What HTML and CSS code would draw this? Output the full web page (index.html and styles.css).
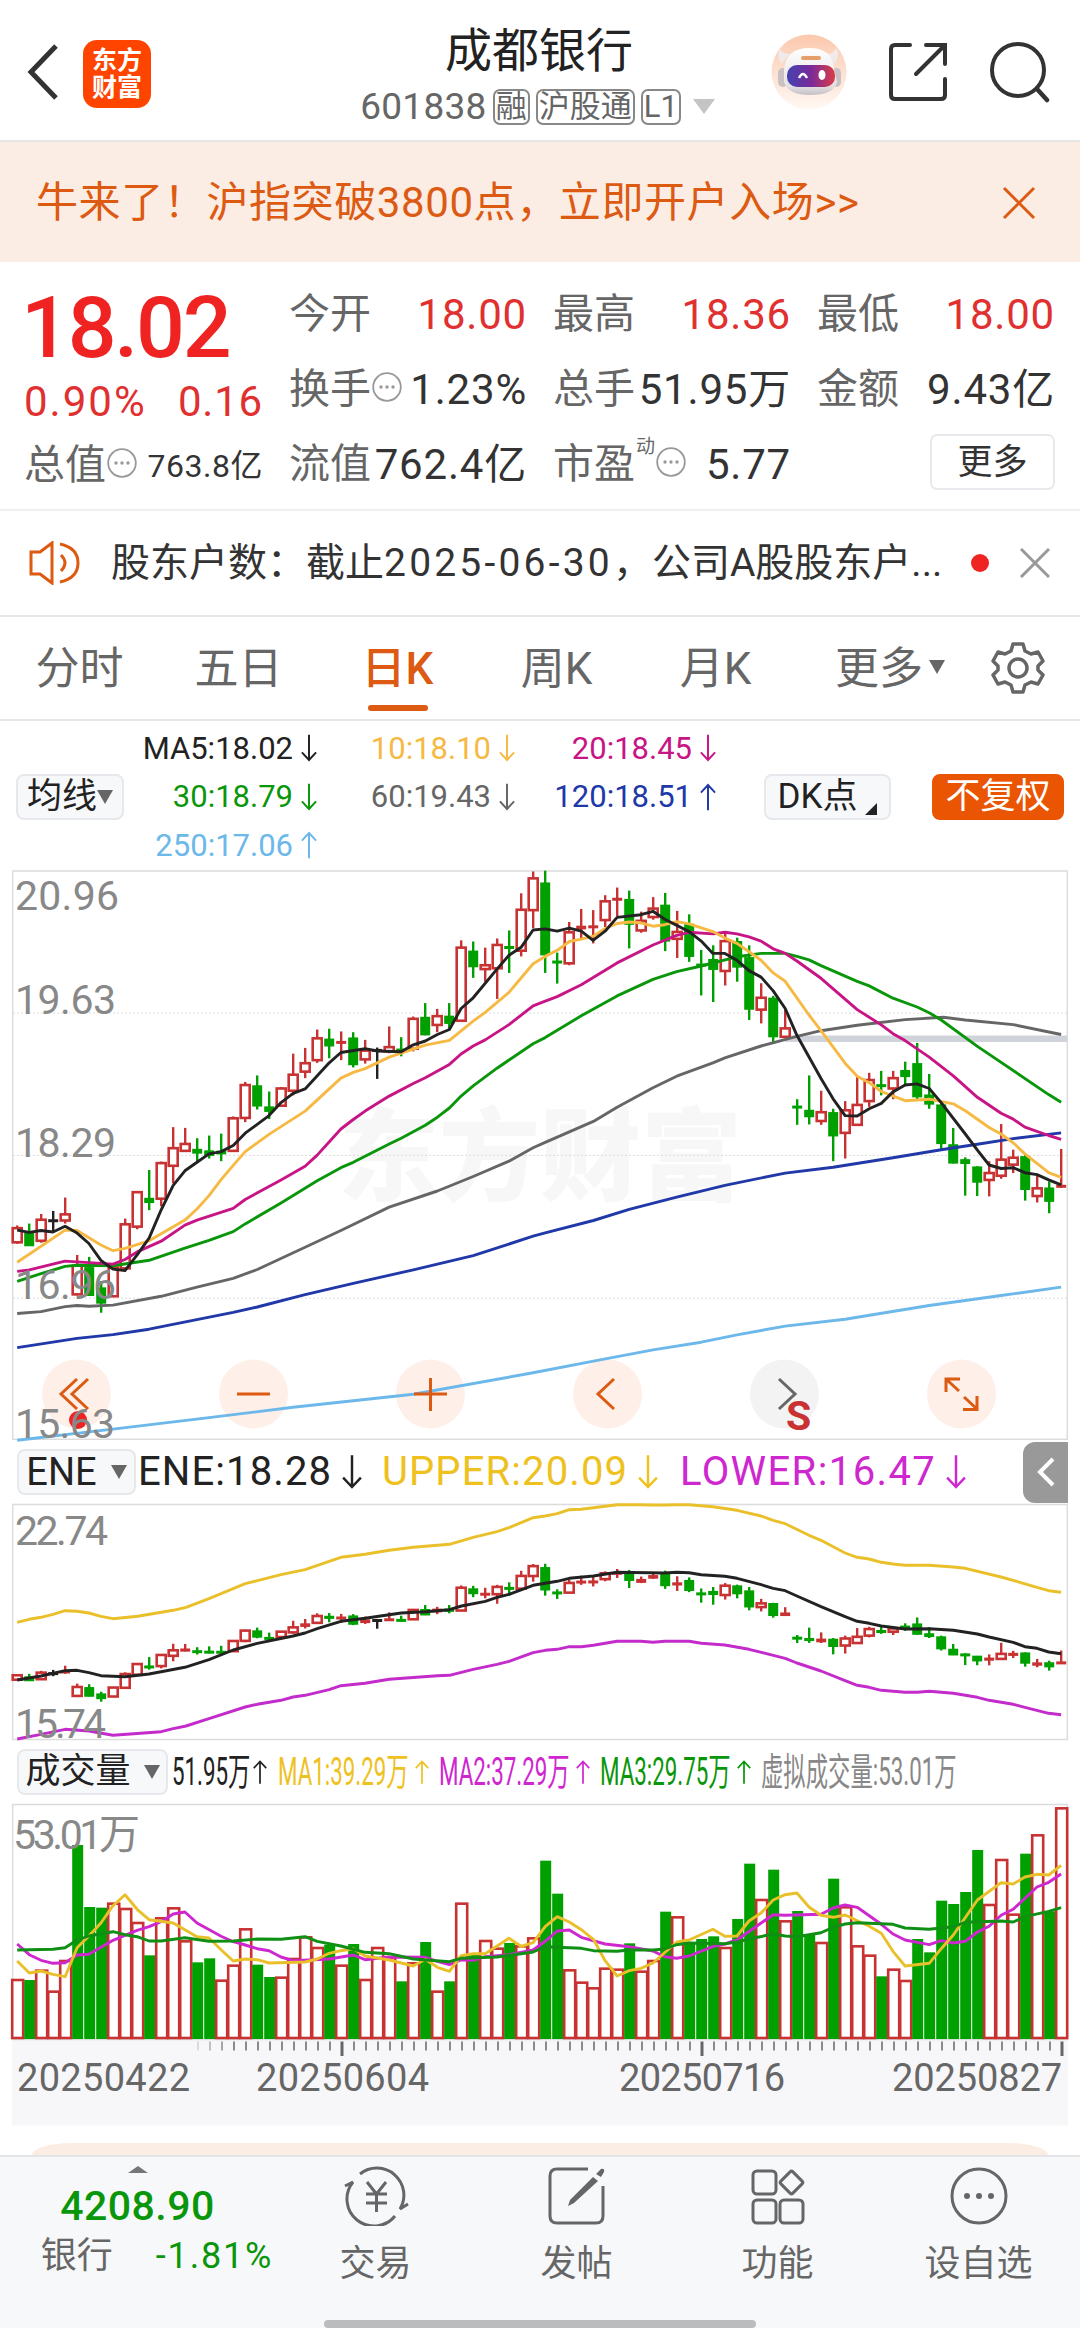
FILE: index.html
```
<!DOCTYPE html>
<html lang="zh-CN">
<head>
  <meta charset="UTF-8" />
  <meta name="viewport" content="width=device-width, initial-scale=1.0"/>
  <title>成都银行 601838</title>
  <link rel="stylesheet" href="styles.css">
</head>
<body>

  <svg class="defs" width="0" height="0">
    <symbol id="down" viewBox="0 0 18 30"><path d="M9 0V28M1 20L9 28.500L17 20" fill="none" stroke="currentColor" stroke-width="2.200"/></symbol>
    <symbol id="up" viewBox="0 0 18 30"><path d="M9 30V2M1 10L9 1.500L17 10" fill="none" stroke="currentColor" stroke-width="2.200"/></symbol>
    <symbol id="dots" viewBox="0 0 30 30"><circle cx="15" cy="15" r="13.800" fill="none" stroke="#999" stroke-width="1.800"/><circle cx="9" cy="15" r="1.700" fill="#999"/><circle cx="15" cy="15" r="1.700" fill="#999"/><circle cx="21" cy="15" r="1.700" fill="#999"/></symbol>
  </svg>

  <header class="top">
    <svg class="back" width="32" height="56" viewBox="0 0 32 56"><path d="M29 2L4 28L29 54" fill="none" stroke="#333" stroke-width="5"/></svg>
    <div class="logo"><span>东方</span><span>财富</span></div>
    <div class="title">
      <h1>成都银行</h1>
      <div class="code"><span class="num">601838</span><i>融</i><i>沪股通</i><i>L1</i><b class="tri"></b></div>
    </div>
    <div class="actions">
      <svg width="76" height="76" viewBox="0 0 76 76">
        <defs>
          <linearGradient id="halo" x1="0" y1="0" x2="0" y2="1"><stop offset="0" stop-color="#fbc8ad"/><stop offset="1" stop-color="#fff8f4"/></linearGradient>
          <linearGradient id="face" x1="0" y1="0" x2="1" y2="0"><stop offset="0" stop-color="#4343b0"/><stop offset=".5" stop-color="#7a2a9a"/><stop offset="1" stop-color="#dc3c44"/></linearGradient>
          <linearGradient id="skin" x1="0" y1="0" x2="0" y2="1"><stop offset="0" stop-color="#fff"/><stop offset=".8" stop-color="#e6e2e4"/><stop offset="1" stop-color="#c4c0c4"/></linearGradient>
        </defs>
        <circle cx="38" cy="38" r="37.500" fill="url(#halo)"/>
        <path d="M10 30Q5 20 9 15Q12 20 19 20ZM64 30Q70 20 65 14Q62 20 56 20Z" fill="#f0eaea"/>
        <rect x="7" y="34" width="10" height="19" rx="5" fill="#c8c2c4"/>
        <rect x="61" y="34" width="9" height="19" rx="5" fill="#c8c2c4"/>
        <path d="M13 36Q15 14 38 14Q62 14 63 35L66 48Q63 61 39 61Q17 61 13 48Z" fill="url(#skin)"/>
        <rect x="30" y="22" width="20" height="4" rx="2" fill="#e3a06c"/>
        <rect x="16" y="31" width="48" height="22" rx="10" fill="url(#face)"/>
        <path d="M28 44Q32 36 36 44" fill="none" stroke="#fff" stroke-width="2.500"/>
        <ellipse cx="51" cy="41" rx="3.500" ry="5" fill="#fff"/>
      </svg>
      <svg width="60" height="60" viewBox="0 0 60 60"><path d="M22 3H7Q3 3 3 7V53Q3 57 7 57H53Q57 57 57 53V37M38 3H57V22M56 4L28 32" fill="none" stroke="#333" stroke-width="4" stroke-linecap="round"/></svg>
      <svg width="62" height="62" viewBox="0 0 62 62"><circle cx="29" cy="29" r="26" fill="none" stroke="#333" stroke-width="4"/><path d="M48 48L58 59" stroke="#333" stroke-width="4.500" stroke-linecap="round"/></svg>
    </div>
  </header>

  <div class="banner">
    <span>牛来了！沪指突破3800点，立即开户入场&gt;&gt;</span>
    <svg width="34" height="34" viewBox="0 0 34 34"><path d="M2 2L32 32M32 2L2 32" stroke="#dc5a12" stroke-width="3"/></svg>
  </div>

  <section class="quote">
    <div class="price">
      <strong>18.02</strong>
      <div class="row change"><span>0.90%</span><span>0.16</span></div>
      <div class="row total"><label>总值</label><svg width="30" height="30"><use href="#dots"/></svg><span class="small">763.8亿</span></div>
    </div>
    <div class="cells">
      <div class="row"><label>今开</label><span class="red">18.00</span></div>
      <div class="row"><label>最高</label><span class="red">18.36</span></div>
      <div class="row"><label>最低</label><span class="red">18.00</span></div>
      <div class="row"><label>换手</label><svg width="30" height="30"><use href="#dots"/></svg><span>1.23%</span></div>
      <div class="row"><label>总手</label><span>51.95万</span></div>
      <div class="row"><label>金额</label><span>9.43亿</span></div>
      <div class="row"><label>流值</label><span>762.4亿</span></div>
      <div class="row"><label>市盈</label><sup>动</sup><svg width="30" height="30"><use href="#dots"/></svg><span>5.77</span></div>
      <div class="row end"><button class="more">更多</button></div>
    </div>
  </section>

  <div class="notice">
    <svg width="52" height="44" viewBox="0 0 52 44"><path d="M2 11H11L23 2V42L11 33H2ZM32 14Q40 22 32 30M31 3Q49 7 49 22Q49 37 31 41" fill="none" stroke="#dc5a12" stroke-width="3"/></svg>
    <p>股东户数：截止<span>2025-06-30</span>，公司A股股东户...</p>
    <b class="dot"></b>
    <svg width="30" height="30" viewBox="0 0 30 30"><path d="M1 1L29 29M29 1L1 29" stroke="#999" stroke-width="3"/></svg>
  </div>

  <nav class="tabs">
    <a>分时</a>
    <a>五日</a>
    <a class="active">日K</a>
    <a>周K</a>
    <a>月K</a>
    <a>更多<b class="tri"></b></a>
    <svg width="54" height="54" viewBox="0 0 54 54"><path d="M22 3H32L34 10L40 13L47 11L52 20L47 25V29L52 34L47 43L40 41L34 44L32 51H22L20 44L14 41L7 43L2 34L7 29V25L2 20L7 11L14 13L20 10Z" fill="none" stroke="#666" stroke-width="3.500" stroke-linejoin="round"/><circle cx="27" cy="27" r="9" fill="none" stroke="#666" stroke-width="3.500"/></svg>
  </nav>

  <div class="legend">
    <button class="pick">均线<b class="tri"></b></button>
    <div class="ma">
      <span class="c-black">MA5:18.02<svg><use href="#down"/></svg></span>
      <span class="c-orange">10:18.10<svg><use href="#down"/></svg></span>
      <span class="c-pink">20:18.45<svg><use href="#down"/></svg></span>
      <span class="c-green">30:18.79<svg><use href="#down"/></svg></span>
      <span class="c-gray">60:19.43<svg><use href="#down"/></svg></span>
      <span class="c-blue">120:18.51<svg><use href="#up"/></svg></span>
      <span class="c-sky">250:17.06<svg><use href="#up"/></svg></span>
    </div>
    <button class="pick dk">DK点<b class="corner"></b></button>
    <button class="pick adjust">不复权</button>
  </div>

  <svg id="kline" class="chart" width="1080" height="570" viewBox="0 870 1080 570"></svg>

  <div class="sub-head">
    <button class="pick ene">ENE<b class="tri"></b></button>
    <span class="c-black e1">ENE:18.28<svg><use href="#down"/></svg></span>
    <span class="c-gold e2">UPPER:20.09<svg><use href="#down"/></svg></span>
    <span class="c-purple e3">LOWER:16.47<svg><use href="#down"/></svg></span>
    <div class="fold"><svg width="18" height="30" viewBox="0 0 18 30"><path d="M16 2L3 15L16 28" fill="none" stroke="#fff" stroke-width="4"/></svg></div>
  </div>

  <svg id="ene" class="chart" width="1080" height="236" viewBox="0 1504 1080 236"></svg>

  <div class="sub-head">
    <button class="pick vol">成交量<b class="tri"></b></button>
    <div class="vols">
      <span class="c-black v0"><em>51.95万</em><svg><use href="#up"/></svg></span>
      <span class="c-gold"><em>MA1:39.29万</em><svg><use href="#up"/></svg></span>
      <span class="c-purple"><em>MA2:37.29万</em><svg><use href="#up"/></svg></span>
      <span class="c-green"><em>MA3:29.75万</em><svg><use href="#up"/></svg></span>
      <span class="c-light"><em>虚拟成交量:53.01万</em></span>
    </div>
  </div>

  <svg id="volume" class="chart" width="1080" height="322" viewBox="0 1804 1080 322"></svg>

  <div class="card"></div>

  <footer class="bar">
    <div class="index">
      <b class="tri up"></b>
      <strong>4208.90</strong>
      <div><label>银行</label><span>-1.81%</span></div>
    </div>
    <a>
      <svg width="66" height="60" viewBox="0 0 66 60"><g fill="none" stroke="#666" stroke-width="3"><path d="M17 8A27 27 0 0 1 57 43L65 38M52 50A27 27 0 0 1 10 16L2 20"/><path d="M24 16L33.500 28L43 16M33.500 28V46M23 28H44M23 37H44"/></g></svg>
      交易
    </a>
    <a>
      <svg width="60" height="60" viewBox="0 0 60 60"><path d="M41 3H10Q3 3 3 10V50Q3 57 10 57H49Q56 57 56 50V20" fill="none" stroke="#666" stroke-width="3"/><path d="M46 11L51 15L27 37L21 40L23 34ZM49 8L54 3Q58 2 57 6L54 11Z" fill="#666"/></svg>
      发帖
    </a>
    <a>
      <svg width="54" height="60" viewBox="0 0 54 60"><g fill="none" stroke="#666" stroke-width="3"><rect x="2" y="5" width="23" height="23" rx="4"/><rect x="2" y="34" width="23" height="23" rx="4"/><rect x="29" y="34" width="23" height="23" rx="4"/><rect x="32" y="8" width="17" height="17" rx="2" transform="rotate(45 40.500 16.500)"/></g></svg>
      功能
    </a>
    <a>
      <svg width="60" height="60" viewBox="0 0 60 60"><circle cx="30" cy="30" r="27" fill="none" stroke="#666" stroke-width="3"/><circle cx="18" cy="30" r="3" fill="#666"/><circle cx="30" cy="30" r="3" fill="#666"/><circle cx="42" cy="30" r="3" fill="#666"/></svg>
      设自选
    </a>
    <div class="home"></div>
  </footer>

  <script src="chart.js"></script>
</body>
</html>
```
FILE: styles.css
```
* { box-sizing: border-box; }
body { margin: 0; width: 1080px; height: 2328px; overflow: hidden; background: #fff; color: #333; font-family: Roboto, "Noto Sans CJK SC", sans-serif; font-size: 42px; line-height: 1; display: flex; flex-direction: column; }
body > * { flex: none; }
svg { display: block; flex: none; }
.defs { position: absolute; }
h1, p { margin: 0; font-weight: 400; }
button { font: inherit; padding: 0; color: inherit; }
i, em { font-style: normal; }

.c-black { color: #222; }
.c-orange { color: #f6b943; }
.c-gold { color: #eec11f; }
.c-pink { color: #c71585; }
.c-purple { color: #cf27cf; }
.c-green { color: #0a960a; }
.c-gray { color: #666; }
.c-blue { color: #2038a8; }
.c-sky { color: #6cb8ea; }
.c-light { color: #888; }
.red { color: #e03030; }
.tri { display: inline-block; border: 8px solid transparent; border-top: 14px solid #666; border-bottom: 0; }

/* header */
.top { height: 142px; border-bottom: 2px solid #e6e6e6; display: grid; grid-template-columns: 83px 68px 1fr 309px; padding-top: 4px; align-items: center; }
.back { margin-left: 27px; }
.logo { width: 68px; height: 68px; margin-top: 4px; border-radius: 14px; background: #ff4400; color: #fff; font-size: 25px; font-weight: 700; line-height: 27px; display: flex; flex-direction: column; align-items: center; justify-content: center; }
.title { text-align: center; padding-left: 150px; }
.title h1 { font-size: 47px; color: #222; margin: 8px 0 14px 6px; }
.code { display: flex; align-items: center; justify-content: center; gap: 6px; font-size: 37px; color: #666; margin-left: 3px; letter-spacing: .3px; }
.code i { border: 2px solid #888; border-radius: 7px; font-size: 31px; line-height: 32px; padding: 0 1px; height: 36px; letter-spacing: 0; }
.code .tri { margin-left: 6px; border-width: 15px 11px 0; border-top-color: #c4c4c4; }
.actions { display: flex; align-items: center; gap: 41px; }

.banner { height: 120px; background: #fcede4; color: #dc5a12; display: flex; align-items: center; justify-content: space-between; padding: 2px 44px 0 36px; }
.banner span { letter-spacing: .6px; }

/* quote */
.quote { height: 249px; border-bottom: 2px solid #f0f0f0; padding: 15px 25px 0 24px; display: flex; gap: 26px; }
.price { width: 239px; display: flex; flex-direction: column; }
.price strong { color: #f02323; font-size: 86px; font-weight: 500; line-height: 101px; letter-spacing: -2.200px; margin-left: -3px; }
.row { display: flex; align-items: center; justify-content: space-between; height: 75px; white-space: nowrap; }
.row label { font-size: 41px; color: #666; }
.row svg { margin: -6px 0 0 1px; }
.row span { margin-left: auto; letter-spacing: .8px; }
.row .small { font-size: 32px; letter-spacing: .5px; }
.price .change { height: 48px; color: #e03030; }
.change span:first-child { margin-left: 0; letter-spacing: 2px; }
.price .total { margin-top: 2px; }
.cells { flex: 1; display: grid; grid-template-columns: repeat(3, 1fr); column-gap: 26px; align-content: start; }
.cells sup { font-size: 19px; margin: -36px 0 0 1px; color: #666; }
.row.end { justify-content: flex-end; }
.more { width: 125px; height: 56px; border: 2px solid #e8e9ec; border-radius: 7px; background: #fff; font-size: 35px; margin-top: -5px; }

.notice { height: 106px; border-bottom: 2px solid #e6e7e9; display: flex; align-items: center; padding: 0 29px 0 29px; }
.notice p { font-size: 39px; margin-left: 30px; width: 860px; white-space: nowrap; }
.notice span { letter-spacing: 3.200px; }
.notice .dot { width: 18px; height: 18px; border-radius: 50%; background: #f02323; margin-right: 31px; }

.tabs { height: 104px; border-bottom: 2px solid #e6e7e9; display: flex; align-items: center; color: #666; font-size: 44px; }
.tabs a { width: 159px; text-align: center; height: 102px; line-height: 105px; position: relative; white-space: nowrap; }
.tabs a:nth-child(6) { width: 196px; padding-right: 6px; }
.tabs .tri { margin: 0 0 10px 6px; }
.tabs .active { color: #dc5a12; font-weight: 500; }
.tabs .active::after { content: ""; position: absolute; left: 50%; bottom: 8px; width: 60px; height: 6px; margin-left: -30px; border-radius: 3px; background: #dc5a12; }

/* average lines legend */
.legend { height: 149px; display: flex; align-items: center; padding: 2px 16px 0; }
.pick { height: 46px; border: 2px solid #e6e8ec; border-radius: 8px; background: #f7f8fa; font-size: 35px; line-height: 40px; color: #222; display: flex; align-items: center; justify-content: center; white-space: nowrap; flex: none; }
.legend .pick { width: 108px; }
.legend .dk { width: 127px; margin-left: 48px; gap: 8px; }
.corner { border-bottom: 12px solid #222; border-left: 12px solid transparent; margin-top: 24px; }
.legend .adjust { width: 132px; margin-left: auto; background: #ea5504; border-color: #ea5504; color: #fff; }
.ma { display: grid; grid-template-columns: 193px 198px 201px; grid-auto-rows: 48.500px; font-size: 31px; }
.ma span { display: flex; align-items: center; justify-content: flex-end; gap: 8px; }
.ma svg { width: 16px; height: 28px; }

.sub-head { height: 64px; display: flex; align-items: center; padding-left: 17px; font-size: 40px; }
.sub-head span { display: flex; align-items: center; gap: 10px; white-space: nowrap; letter-spacing: 1.100px; }
.sub-head span svg { width: 20px; height: 36px; }
.ene { width: 119px; gap: 14px; font-size: 38px; }
.vol { width: 151px; gap: 13px; }
.e1 { margin-left: 2px; width: 244px; }
.e2 { width: 298px; }
.sub-head .e3 { letter-spacing: 1.400px; }
.fold { margin-left: auto; margin-right: 12px; width: 45px; height: 61px; border-radius: 12px 0 0 12px; background: #999; display: flex; align-items: center; justify-content: center; }
/* volume legend is squeezed so all five values fit on one line */
.vols { display: flex; align-items: center; margin-left: 4px; height: 60px; font-size: 38px; }
.sub-head .vols span { width: 161px; gap: 0; letter-spacing: 0; }
.sub-head .vols .v0 { width: 106px; }
.vols em { display: block; width: 137px; transform: scaleX(.588); transform-origin: left; }
.vols .v0 em { width: 81px; }
.sub-head .vols svg { width: 14px; height: 36px; }

/* charts */
.chart { overflow: visible; }
.frame { fill: none; stroke: #dcdcdc; stroke-width: 1.500; }
.grid { stroke: #ddd; stroke-dasharray: 2 2; }
.line { fill: none; stroke-width: 2.900; stroke-linejoin: round; }
.label { fill: #888; font-size: 41px; }
.mark { fill: #f7f7f7; font-size: 101px; font-weight: 900; }
.up-bar { fill: #fff; stroke: #c83232; stroke-width: 2.600; }
.down-bar { fill: #00a000; }
.wick { stroke-width: 2.400; }
.round { fill: #feefe8; }
.glyph { fill: none; stroke: #dc5a12; stroke-width: 3; }
.sell { fill: #c83232; font-size: 41px; font-weight: 700; }
.date { fill: #666; font-size: 38px; }

.card { margin: 17px 32px 0; height: 12px; border-radius: 40px 40px 0 0 / 12px 12px 0 0; background: #fcede4; }

/* bottom bar */
.bar { position: relative; height: 173px; background: #f7f8fa; border-top: 2px solid #e3e4e7; display: flex; color: #666; }
.bar a { width: 201px; padding-top: 9px; font-size: 36px; display: flex; flex-direction: column; align-items: center; gap: 20px; }
.index { width: 275px; text-align: center; display: flex; flex-direction: column; align-items: center; color: #0a960a; }
.index .up { border-width: 0 10px 7px; border-bottom: 7px solid #777; margin-top: 9px; }
.index strong { font-weight: 500; font-size: 41px; margin-top: 13px; letter-spacing: .5px; }
.index div { display: flex; gap: 43px; align-items: center; margin: 11px 0 0 39px; font-size: 36px; }
.index div span { letter-spacing: 1.800px; }
.index label { color: #666; }
.home { position: absolute; left: 324px; bottom: 0; width: 432px; height: 8px; border-radius: 4px; background: #bbbcbe; }
```
FILE: chart.js
```
const RED = '#c83232', GREEN = '#00a000', BLACK = '#222';
const KX = 2.9037; // plot units per px across

// body top, body bottom, high, low, colour
const candles = `962,999,955,1003,r 975,1008,950,1008,g 940,995,925,1000,r 940,942,917,970,k 926,942,882,950,r
1060,1135,1032,1138,r 1065,1138,1037,1138,g 1118,1158,1100,1183,g 1065,1140,1065,1140,r 952,1067,937,1067,r
868,958,865,965,r 884,895,810,915,g 792,885,788,905,r 753,799,698,845,r 742,760,700,762,r
756,766,727,788,g 760,772,720,780,g 761,768,715,787,g 675,760,670,763,r 588,674,580,685,r
590,643,563,652,g 645,657,605,677,g 597,642,593,645,r 561,603,506,615,r 531,553,491,570,r
466,523,443,530,r 468,486,441,518,g 474,477,448,523,r 465,535,450,542,g 498,521,470,532,r
495,499,490,572,k 489,500,435,505,r 494,503,463,513,g 415,493,409,500,r 411,457,374,458,g
408,431,389,450,r 408,427,374,443,g 229,420,210,422,r 238,279,213,308,g 275,285,229,318,r
222,283,205,363,r 226,230,184,295,g 130,237,87,252,r 48,131,30,178,r 60,248,28,295,g
264,267,242,323,g 189,270,162,275,r 173,180,128,205,r 172,177,131,218,r 108,157,92,175,r
100,104,72,147,r 103,168,80,231,g 159,184,135,190,r 127,149,97,156,r 118,212,86,238,g
188,206,133,256,r 168,252,142,266,g 272,276,235,354,g 260,286,223,371,g 212,290,190,328,r
213,280,203,318,g 255,390,223,418,g 360,391,322,427,r 361,462,355,480,g 440,462,392,465,r
643,647,625,692,g 654,671,563,691,g 659,682,603,692,r 660,721,650,787,g 654,713,630,780,r
640,692,567,695,r 575,630,556,645,r 587,592,551,615,g 570,597,551,625,r 550,566,527,590,g
532,619,478,625,g 614,638,559,650,g 640,741,630,755,g 744,792,700,793,g 783,793,777,877,g
802,842,800,878,g 818,836,787,879,r 783,825,690,833,r 778,796,757,818,r 775,861,770,890,g
858,878,825,895,r 857,892,840,923,g 850,855,755,857,r`.split(/\s+/).map(s => s.split(','));

const volumes = `720r 720g 692r 755r 663r 315g 501g 503g 491r 507r 549r 646g 535r 505r 604r 667g 655g 722r 677r 568r
674g 711g 713r 657r 592r 624r 614g 677r 612g 720r 624r 654r 724g 670r 606g 755r 724g 491r 640g 603r
626r 609g 619r 595r 362g 461g 691r 728r 745r 686r 689r 610g 695r 663r 515g 532r 606g 597g 589g 624r
537g 371g 480r 389g 544r 513g 584g 609r 416g 502r 619r 647r 709g 689r 723r 597g 637g 482g 492g 456g
330g 495r 360r 524r 341g 286r 514g 205r`.split(/\s+/);

const ma = {
  '#6cb8ea': '50,1516 328,1487 607,1457 851,1430 1200,1396 1548,1340 1750,1305 1896,1280 2036,1260 2140,1241 2280,1218 2454,1200 2698,1164 2907,1138 3081,1116',
  '#2038a8': '50,1274 224,1250 328,1240 433,1226 677,1182 747,1168 886,1136 1026,1106 1200,1071 1374,1034 1548,983 1583,974 1723,942 1827,913 1965,881 2105,850 2280,818 2419,803 2593,778 2733,757 2838,743 2942,728 3081,713',
  '#666': '50,1185 119,1180 189,1167 224,1164 258,1166 328,1163 468,1140 572,1116 677,1093 747,1070 886,1012 990,968 1130,907 1270,865 1374,827 1478,787 1548,752 1583,738 1723,683 1792,646 1896,595 1965,565 2070,530 2105,517 2210,486 2314,461 2384,446 2489,432 2628,417 2740,411 2803,418 2942,430 3081,456',
  '#0a960a': '50,1101 119,1081 189,1062 224,1059 328,1060 433,1046 537,1014 607,994 677,971 712,951 816,896 921,838 990,804 1026,790 1130,742 1165,727 1235,693 1270,672 1305,648 1339,617 1374,590 1443,544 1548,480 1583,464 1688,407 1792,355 1896,312 1965,292 2036,277 2140,253 2210,244 2280,244 2314,252 2349,261 2384,276 2489,317 2524,329 2593,361 2663,384 2698,399 2733,418 2838,487 3045,613 3081,633',
  '#c71585': '50,1075 85,1071 189,1048 258,1052 328,1056 363,1044 398,1024 468,996 537,954 572,941 677,910 712,887 816,836 886,800 921,771 990,703 1026,678 1060,656 1130,617 1200,584 1235,569 1305,534 1339,507 1374,486 1409,470 1478,430 1548,381 1583,369 1618,357 1688,326 1792,269 1896,222 1965,197 2001,189 2070,193 2105,189 2140,193 2175,201 2210,212 2245,232 2280,244 2314,264 2384,309 2489,391 2559,431 2593,454 2628,472 2698,515 2768,564 2838,620 2907,662 2942,677 2976,698 3045,720 3081,730',
  '#f6b943': '50,1051 189,967 224,968 293,1006 328,1021 363,1015 433,995 537,941 572,912 607,877 642,835 677,798 712,762 781,717 886,656 990,570 1026,555 1060,545 1130,515 1235,484 1305,471 1374,421 1409,398 1478,346 1548,271 1583,252 1618,236 1653,213 1688,207 1723,199 1757,179 1792,166 1827,162 1861,164 1896,173 1930,169 1965,161 2001,167 2070,187 2105,204 2140,218 2175,240 2210,262 2245,295 2280,317 2349,405 2384,446 2454,531 2489,565 2524,582 2559,605 2628,629 2698,625 2768,637 2803,655 2872,699 2907,716 2942,739 2976,768 3045,817 3081,829',
  '#222': '50,967 85,973 119,968 154,972 189,957 224,975 258,1002 293,1046 328,1069 363,1073 398,1032 433,988 468,914 503,850 537,812 572,790 607,768 642,762 677,746 712,714 781,668 816,634 851,610 886,598 956,530 990,503 1060,493 1095,499 1165,501 1200,483 1235,473 1270,456 1305,443 1339,388 1374,360 1443,285 1478,249 1513,228 1548,183 1583,180 1618,186 1653,178 1688,186 1722,210 1757,186 1792,150 1861,143 1896,134 1930,155 2001,187 2036,212 2070,244 2105,244 2140,262 2175,289 2210,306 2245,342 2280,388 2314,458 2384,571 2419,624 2454,668 2489,669 2524,650 2559,636 2593,606 2628,588 2663,585 2698,597 2733,634 2803,716 2838,758 2872,797 2907,806 2942,804 2976,817 3011,822 3045,836 3081,849'
};

const eneLines = {
  '#eac02a': '50,577 85,568 119,562 154,553 189,542 224,544 258,549 293,559 328,566 400,559 503,541 540,532 607,506 712,461 816,434 886,419 990,382 1060,373 1130,361 1200,352 1305,343 1374,322 1443,305 1478,293 1548,263 1583,258 1618,251 1653,239 1688,238 1792,224 1861,224 1896,225 1930,225 1965,224 2001,224 2070,230 2140,241 2210,258 2245,271 2280,281 2349,316 2384,331 2454,369 2489,382 2524,387 2559,397 2593,402 2628,406 2698,406 2768,411 2803,415 2907,441 3011,472 3045,482 3081,487',
  '#222': '50,750 119,738 189,722 224,721 258,728 293,737 363,740 433,732 537,712 607,689 677,660 747,640 851,618 886,609 921,596 990,574 1060,565 1165,549 1235,545 1305,539 1340,528 1409,514 1443,502 1478,493 1548,466 1583,460 1618,454 1653,445 1723,438 1792,427 1930,429 1965,427 2001,428 2036,434 2105,439 2140,445 2210,464 2245,475 2280,482 2314,498 2384,530 2454,560 2489,574 2524,580 2559,588 2628,597 2698,596 2768,601 2838,612 2872,621 2942,637 2976,650 3011,655 3045,666 3081,671',
  '#c32bcb': '50,927 119,913 189,898 258,903 328,916 468,905 503,896 540,888 607,866 712,831 747,823 816,811 851,801 886,796 956,779 990,767 1060,760 1130,748 1270,737 1305,736 1374,718 1443,703 1478,694 1548,668 1583,661 1618,658 1653,650 1688,650 1723,646 1792,634 1861,634 1896,637 1930,634 2001,634 2036,640 2105,645 2175,658 2280,685 2314,699 2384,723 2454,752 2489,766 2524,772 2559,781 2628,787 2663,787 2698,784 2768,790 2838,802 2872,811 2942,823 2976,832 3045,850 3081,854'
};

const volLines = {
  '#cf27cf': '50,612 85,644 119,661 154,670 189,668 224,645 258,643 328,601 363,586 398,571 433,560 468,545 503,522 537,516 572,549 642,589 677,605 712,615 747,626 781,632 816,651 851,662 956,657 1026,645 1060,659 1130,651 1235,652 1270,664 1305,674 1339,660 1374,661 1409,650 1478,644 1548,630 1583,604 1618,573 1653,570 1688,592 1757,612 1827,620 1896,633 1930,650 1965,655 2001,648 2070,620 2105,612 2140,600 2210,549 2245,524 2280,526 2384,523 2419,504 2454,495 2489,502 2559,553 2593,582 2628,600 2698,614 2733,602 2768,609 2803,604 2838,576 2872,559 2907,526 2942,508 3011,441 3045,427 3081,402',
  '#eac02a': '50,663 85,699 119,693 154,703 189,710 224,623 258,588 293,549 328,497 363,464 398,508 433,539 503,549 572,590 607,594 642,629 677,663 712,657 747,659 781,669 886,666 921,657 956,640 990,632 1026,626 1060,648 1130,660 1200,678 1235,658 1270,682 1305,694 1339,647 1374,641 1409,641 1478,595 1513,619 1548,608 1583,560 1618,530 1653,546 1688,569 1723,598 1757,662 1792,708 1827,692 1861,685 1896,669 1965,606 2001,600 2070,568 2105,589 2140,588 2175,543 2210,519 2245,480 2280,464 2314,459 2349,501 2384,526 2419,532 2454,525 2524,559 2559,580 2593,634 2628,678 2698,670 2733,626 2768,585 2838,480 2907,428 2942,432 2976,411 3011,403 3045,405 3081,376',
  '#0f8f14': '50,630 154,628 189,623 224,600 258,588 328,575 363,584 398,590 433,603 468,603 537,593 607,604 677,603 747,597 816,598 886,590 921,604 990,618 1060,637 1130,641 1200,657 1305,665 1339,655 1443,651 1513,641 1548,636 1583,620 1688,625 1723,632 1792,634 1827,630 1896,630 1930,627 1965,614 2001,609 2105,611 2140,606 2175,597 2245,582 2280,588 2314,590 2384,578 2419,562 2454,552 2489,548 2593,553 2628,564 2698,568 2768,560 2803,547 2907,543 2942,546 2976,530 3045,514 3081,503'
};

const px = i => 17.2 + i * 12;

function frame(top, bottom) {
  return `<rect class="frame" x="12.700" y="${top}" width="1054.600" height="${bottom - top}"/>`;
}

function lines(set, toY) {
  return Object.entries(set).map(([color, str]) => {
    const pts = str.split(' ').map(p => {
      const [x, y] = p.split(',');
      return (x / KX).toFixed(1) + ',' + toY(+y).toFixed(1);
    }).join(' ');
    return `<polyline class="line" stroke="${color}" points="${pts}"/>`;
  }).join('');
}

function drawCandles(toY) {
  return candles.map(([a, b, hi, lo, c], i) => {
    const color = c === 'r' ? RED : c === 'g' ? GREEN : BLACK;
    const x = px(i), top = toY(+a), h = toY(+b) - top;
    let out = `<path class="wick" stroke="${color}" d="M${x} ${toY(+hi)}V${toY(+lo)}"/>`;
    if (c === 'r' && h > 3) out += `<rect class="up-bar" x="${x - 4.500}" y="${top}" width="9" height="${h}"/>`;
    else out += `<rect fill="${color}" x="${x - 5}" y="${top - .5}" width="10" height="${Math.max(h, 2) + 1}"/>`;
    return out;
  }).join('');
}

function label(x, y, text, len) {
  return `<text class="label" x="${x}" y="${y}" textLength="${len}">${text}</text>`;
}

// daily K
const kY = v => 860 + v / 2.613;
let k = '<text class="mark" x="338" y="1193">东方财富</text>';
k += [400, 772, 1145].map(v => `<path class="grid" d="M13 ${kY(v)}H1067"/>`).join('') + frame(871, 1439.3);
k += [76.5, 253.5, 430.5, 607.5, 784.5, 961.5].map((x, i) => `<circle cx="${x}" cy="1394" r="34.500" ${i === 4 ? 'fill="#f3f3f3"' : 'class="round"'}/>`).join('');
k += '<rect x="785" y="1035.500" width="282" height="6.500" fill="#d0d4da"/>';
k += drawCandles(kY) + lines(ma, kY);
k += `<path class="glyph" d="M77 1379L61 1394L77 1409M88 1379L72 1394L88 1409M237 1394H270M414 1394H447M430.500 1378V1411M614 1379L598 1394L614 1409"/>
  <path class="glyph" d="M959 1391L946 1379M946 1392V1379H960M964 1397L977 1409M977 1396V1409.500H963"/>
  <path d="M779 1379L795 1394L779 1409" fill="none" stroke="#666" stroke-width="3"/>`;
k += '<circle cx="78" cy="1420" r="9" fill="#f02323"/><text class="sell" x="786" y="1430">S</text>';
k += label(15, 910, '20.96', 104) + label(15, 1014, '19.63', 101) + label(15, 1157, '18.29', 101) + label(15, 1299, '16.96', 101) + label(15, 1438, '15.63', 100);
document.getElementById('kline').innerHTML = k;

// ENE
const eY = v => 1430 + v / 3;
document.getElementById('ene').innerHTML = frame(1504.5, 1739.5) + drawCandles(v => 1560.4 + v * .1194) + lines(eneLines, eY)
  + label(15, 1545, '22.74', 93) + label(15, 1738, '15.74', 91);

// volume
const vY = v => 1740 + v / 3;
let v = '<rect x="12" y="2040" width="1056" height="85.500" fill="#f7f7fa"/>' + frame(1804.5, 2039.5);
v += volumes.map((s, i) => {
  const y = vY(parseInt(s)), x = px(i);
  return s.endsWith('r')
    ? `<rect class="up-bar" x="${x - 5}" y="${y}" width="11" height="${2038 - y}"/>`
    : `<rect class="down-bar" x="${x - 5}" y="${y}" width="11" height="${2039 - y}"/>`;
}).join('');
v += lines(volLines, vY) + label(13, 1849, '53.01万', 127);
for (let i = 15; i < 88; i++) {
  const big = i === 27 || i === 57 || i === 87;
  v += `<path stroke="#666" opacity="${i < 18 ? (i - 14) * .25 : 1}" stroke-width="${big ? 3 : 1.500}" d="M${px(i) + .8} 2041.500V${big ? 2056 : 2050.500}"/>`;
}
[[17, '20250422', 173], [256, '20250604', 173], [619, '20250716', 166], [892, '20250827', 170]].forEach(([x, t, len]) => {
  v += `<text class="date" x="${x}" y="2091" textLength="${len}">${t}</text>`;
});
document.getElementById('volume').innerHTML = v;
```
